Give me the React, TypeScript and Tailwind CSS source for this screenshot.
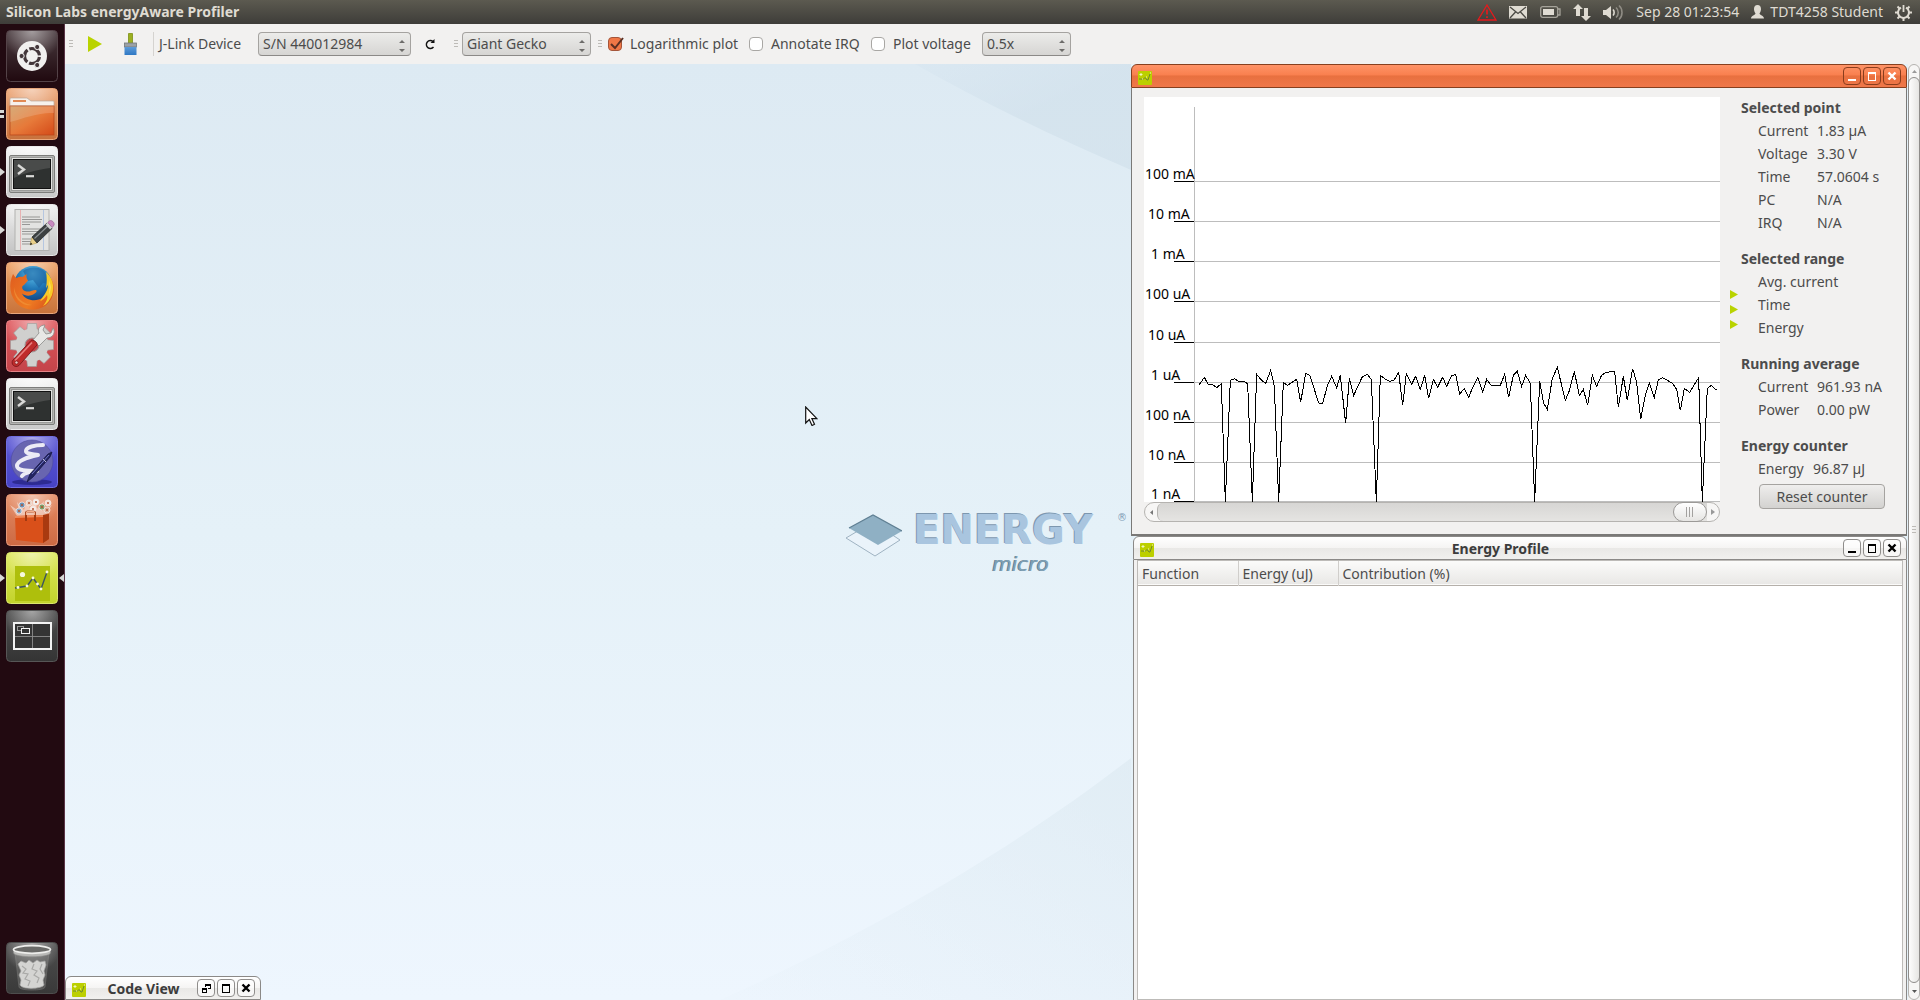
import React, { useState } from "react";

type Children = { children: React.ReactNode };

/* ---------- launcher artwork ---------- */

function Tile({ id, from, to, edge, children }: { id: string; from: string; to: string; edge: string } & Children) {
  return (
    <svg width="52" height="52" viewBox="0 0 52 52" aria-hidden="true">
      <defs>
        <linearGradient id={id} x1="0" y1="0" x2="0" y2="1">
          <stop offset="0" stopColor={from} />
          <stop offset="1" stopColor={to} />
        </linearGradient>
        <radialGradient id={`${id}-shine`} cx="0.5" cy="0" r="0.6">
          <stop offset="0" stopColor="#fff" stopOpacity="0.5" />
          <stop offset="1" stopColor="#fff" stopOpacity="0" />
        </radialGradient>
      </defs>
      <rect x="0.5" y="0.5" width="51" height="51" rx="4" fill={`url(#${id})`} stroke={edge} />
      <rect x="1" y="1" width="50" height="50" rx="4" fill={`url(#${id}-shine)`} />
      {children}
    </svg>
  );
}

function DashIcon() {
  return (
    <Tile id="dash" from="#4a3c40" to="#20090f" edge="#544348">
      <circle cx="26" cy="26" r="15" fill="#f1f0ef" />
      <circle cx="26" cy="26" r="7.5" fill="none" stroke="#43363a" strokeWidth="3.2" strokeDasharray="13.7 2" strokeDashoffset="-1" />
      {[[15.6, 26], [31.2, 17], [31.2, 35]].map(([x, y]) => (
        <circle key={`${x}-${y}`} cx={x} cy={y} r="2.6" fill="#43363a" stroke="#f1f0ef" strokeWidth="1" />
      ))}
    </Tile>
  );
}

function FilesIcon() {
  return (
    <Tile id="files" from="#eda677" to="#c8713c" edge="#e9a77c">
      <defs>
        <linearGradient id="folder" x1="0" y1="0" x2="1" y2="1">
          <stop offset="0" stopColor="#cf9a5c" />
          <stop offset="0.5" stopColor="#e77a3a" />
          <stop offset="1" stopColor="#d44a18" />
        </linearGradient>
      </defs>
      <path d="M4 18V11a1 1 0 0 1 1-1h16l4 3h22a1 1 0 0 1 1 1v4z" fill="#f6f1ec" stroke="#b9a89b" strokeWidth="0.7" />
      <rect x="7" y="12" width="13" height="2" fill="#e08a55" />
      <rect x="4" y="18" width="44" height="29" fill="url(#folder)" stroke="#b8481b" strokeWidth="0.8" />
      <path d="M4 18h44v7C34 24 18 30 4 34z" fill="#fff" opacity="0.16" />
    </Tile>
  );
}

function TerminalIcon({ id }: { id: string }) {
  return (
    <Tile id={id} from="#f4f4f4" to="#c9c9c9" edge="#ececec">
      <rect x="3.5" y="9.5" width="45" height="37" rx="1.5" fill="#b4b4b2" stroke="#7d7d7b" />
      <rect x="5.5" y="11.5" width="41" height="33" fill="#e2e2e0" stroke="#9a9a98" />
      <rect x="7.5" y="13.5" width="37" height="29" fill="#2e3130" stroke="#111" />
      <path d="M8 14h36v8C30 24 18 27 8 32z" fill="#fff" opacity="0.13" />
      <path d="M12 19l6 4.5-6 4.5" fill="none" stroke="#d9d9d7" strokeWidth="2.4" />
      <path d="M20 30.2h8" stroke="#d9d9d7" strokeWidth="2.2" />
    </Tile>
  );
}

function EditorIcon() {
  return (
    <Tile id="editor" from="#efefef" to="#c2c2c2" edge="#e6e6e6">
      <rect x="9" y="5.5" width="34" height="41" fill="#e3e3e1" stroke="#b2b2b0" />
      <path d="M14.5 6v40" stroke="#e9a6a6" strokeWidth="0.8" />
      <path d="M37.5 6v40" stroke="#a9bfe0" strokeWidth="0.8" />
      <path d="M16 13h18M16 15.500h20M16 18h19M16 20.500h8M16 25h19M16 27.500h18M16 30h16M16 35h14M16 37.500h12M16 40h9" stroke="#8f8f8d" strokeWidth="0.9" />
      <path d="M24 41l2-8 5 6z" fill="#ead08b" stroke="#b69a4c" strokeWidth="0.5" />
      <path d="M26 33l15-14 5 5.500L31 39z" fill="#3d4142" stroke="#1d1f20" strokeWidth="0.7" />
      <path d="M28.500 34.500l14-13" stroke="#8d9294" strokeWidth="1.1" />
      <path d="M39.500 20.500l2.200-2 4.600 5-2.200 2z" fill="#cfcfcf" />
      <path d="M41.700 18.500l2-1.700c2-1 5 1.600 4.400 4.200l-1.800 2.500z" fill="#c98ac0" stroke="#8f5d88" strokeWidth="0.6" />
      <path d="M24 41l.7-2.800 1.700 2z" fill="#222" />
    </Tile>
  );
}

function FirefoxIcon() {
  return (
    <Tile id="firefox" from="#eda063" to="#c8733b" edge="#e9a77c">
      <defs>
        <radialGradient id="globe" cx="0.5" cy="0.2" r="0.8">
          <stop offset="0" stopColor="#5fc0ea" />
          <stop offset="0.5" stopColor="#2178b8" />
          <stop offset="1" stopColor="#123a78" />
        </radialGradient>
        <linearGradient id="fox" x1="0" y1="0.2" x2="1" y2="0.8">
          <stop offset="0" stopColor="#e2611f" />
          <stop offset="0.6" stopColor="#ee7a22" />
          <stop offset="1" stopColor="#d9541b" />
        </linearGradient>
      </defs>
      <circle cx="27" cy="23" r="19" fill="url(#globe)" />
      <path d="M17 9c5-4 14-5 20-1 4 3 3 9 7 14l-7-1-4 5-6-8-5 1z" fill="#1b5e9d" opacity="0.55" />
      <path d="M7 12c1 1.500 2 3 3.500 4 2-1 4-1.500 6-1l4-3c0 3-.5 5 1.500 6.500l-4 4.500c-3 1-2 5 1 6 4 2 8-1.500 11-1 1.500 1 0 3-2 4-4 2.500-9 2-12-.5 3 7 14 9 21 4 5-3 7-9 8-19 5 8 3 19-3 25-8 8-22 8-30 1C4 35 2 23 7 12z" fill="url(#fox)" />
      <path d="M40 10c6 5 9 14 6 23-2 5-5 9-9 11 4-5 5-8 4-11-2 3-4 5-7 6 5-7 8-11 8-16-1 1-1 2-2 3 1-6 1-11 0-16z" fill="#f7c928" />
      <path d="M43 18c2 5 2 10 0 15 1-5 1-10 0-15z" fill="#fff08a" />
      <path d="M8 25c1 9 8 17 18 18-9 2-19-6-18-18z" fill="#f29a3c" opacity="0.6" />
    </Tile>
  );
}

function SettingsIcon() {
  return (
    <Tile id="settings" from="#e0575c" to="#c4444a" edge="#e58286">
      <g fill="#d0d0ce" stroke="#9a9a98" strokeWidth="0.6">
        {[0, 45, 90, 135, 180, 225, 270, 315].map((a) => (
          <path key={a} d="M20.500 12l1-8.500h9l1 8.500z" transform={`rotate(${a} 26 25)`} />
        ))}
      </g>
      <circle cx="26" cy="25" r="16.500" fill="#d0d0ce" />
      <circle cx="26" cy="25" r="7" fill="#c6444a" stroke="#9a9a98" />
      <path d="M27 20l6-7c-2-4 1-8 6-8l-2 5 3 4 5-1 2-5c3 4 0 10-6 10l-8 8z" fill="#e8e8e6" stroke="#8b8b89" strokeWidth="0.8" />
      <path d="M7 40L25 20.500c2-1.500 7 2 6 4.500L13 45.500c-4 3-9-1.500-6-5.500z" fill="#bf2b2b" stroke="#7d1518" strokeWidth="0.9" />
      <path d="M9 40.500L26 22.500" stroke="#e88080" strokeWidth="1.600" />
      <circle cx="10.500" cy="42.500" r="1.600" fill="#f0c8c8" stroke="#7d1518" strokeWidth="0.7" />
    </Tile>
  );
}

function EmacsIcon() {
  return (
    <Tile id="emacs" from="#5e5ad6" to="#4642c4" edge="#716ee0">
      <ellipse cx="26" cy="46" rx="20" ry="3" fill="#1c1a70" opacity="0.6" />
      <circle cx="26" cy="25" r="21" fill="#6865b0" stroke="#4d4aa0" strokeWidth="0.6" />
      <path d="M37 9c-8 0-17 2-17 6 0 3 7 3 12 4-9 2-21 5-21 11 0 5 11 5 20 5-5 0-13 2-15 5" fill="none" stroke="#ecebf5" strokeWidth="4" strokeLinecap="round" strokeLinejoin="round" />
      <path d="M21 46l3-8L42 18l4-2-2 5-17 20z" fill="#232564" stroke="#121238" strokeWidth="0.7" />
      <path d="M26 38l17-19" stroke="#7479c4" strokeWidth="1" />
      <path d="M37 23l3 3" stroke="#b9b9d6" strokeWidth="1" />
    </Tile>
  );
}

function SoftwareIcon() {
  return (
    <Tile id="software" from="#e58a62" to="#cc6a44" edge="#e6997a">
      <path d="M11 22L4 11l9 6-2-9 7 8 3-10 3 9 5-11 2 11 7-8-2 10 10-6-7 11z" fill="#fff" opacity="0.45" />
      {[[16, 11, "#6d93b8"], [23, 9, "#e9d2c4"], [30, 8, "#f2f2f0"], [36, 13, "#7fa06d"], [13, 17, "#8aa7c4"], [42, 9, "#f1e2da"], [27, 15, "#f4ece8"], [41, 16, "#d9b09a"]].map(([x, y, c]) => (
        <g key={`${x}-${y}`}>
          <circle cx={x} cy={y} r="3" fill={String(c)} stroke="#f6e6de" strokeWidth="0.8" />
          <circle cx={x} cy={y} r="1" fill="#b5532f" />
        </g>
      ))}
      <path d="M9 22l28-1 6-1v25l-6 4-27-3z" fill="#d9501a" />
      <path d="M37 21l6-1v25l-6 4z" fill="#a93a10" />
      <path d="M9 22l28-1v2l-28 1z" fill="#f08a5a" />
      <path d="M20 27v-8c0-1 1-1.500 2-1.500h5c1 0 2 .5 2 1.500v8" fill="none" stroke="#a33a12" strokeWidth="2" />
      <path d="M20.500 21v-2c0-1 1-1.500 2-1.500h4c1 0 2 .5 2 1.500v2" fill="none" stroke="#f3b08e" strokeWidth="1.300" />
    </Tile>
  );
}

function ProfilerIcon() {
  return (
    <Tile id="profiler" from="#dfe85e" to="#c3d32c" edge="#dbe66e">
      <rect x="9" y="14" width="35" height="35" fill="#aebf0c" />
      <circle cx="16.500" cy="22.500" r="2.600" fill="#f6f9dc" />
      <path d="M9 36l12-2 6-8 8 11 6-17" fill="none" stroke="#3c5560" strokeWidth="1.400" />
      {[[12, 35.500], [21, 34], [27, 26], [31.500, 32], [35, 37], [41, 20]].map(([x, y]) => (
        <circle key={x} cx={x} cy={y} r="1.400" fill="#f6f9dc" />
      ))}
    </Tile>
  );
}

function WorkspaceIcon() {
  return (
    <Tile id="spaces" from="#4c4c4c" to="#343434" edge="#565656">
      <rect x="8" y="13" width="37" height="26" fill="#343434" stroke="#f2f2f2" strokeWidth="2" />
      <path d="M26.500 14v24M9 26.500h35" stroke="#8c8c8c" strokeWidth="0.900" />
      <rect x="11.500" y="16.500" width="6" height="4" fill="none" stroke="#999" />
      <rect x="15.500" y="18.500" width="8" height="5" fill="#343434" stroke="#f2f2f2" />
    </Tile>
  );
}

function TrashIcon() {
  return (
    <Tile id="trash" from="#4f4f4f" to="#393939" edge="#4d4d4d">
      <path d="M9 10l4 35c0 4 26 4 26 0l4-35z" fill="#8c8c8a" opacity="0.35" stroke="#b5b5b3" strokeWidth="0.8" />
      <path d="M12 22l3-3 5 2 3-3 4 3 4-3 3 2 5-1 1 4-2 6 1 4-2 5 1 5c-2 4-22 5-24 0l1-5-2-5 2-4z" fill="#d4d4d2" stroke="#a2a2a0" strokeWidth="0.7" />
      <path d="M16 24l4 3-3 4 5 1-3 5 5 2-2 5M28 22l-2 5 5 2-3 4 5 3-2 5M36 22l-2 5 3 5" fill="none" stroke="#a9a9a7" strokeWidth="1.200" />
      <path d="M7.500 7v4c2 5 35 5 37 0V7" fill="#b9b9b7" stroke="#8a8a88" strokeWidth="0.6" />
      <ellipse cx="26" cy="7.500" rx="18.500" ry="3.800" fill="#6a6a68" stroke="#ededeb" strokeWidth="1.700" />
    </Tile>
  );
}

type LauncherEntry = { label: string; icon: React.ReactNode; left?: "arrow" | "bars"; right?: boolean };

const launcherEntries: LauncherEntry[] = [
  { label: "Dash home", icon: <DashIcon /> },
  { label: "Files", icon: <FilesIcon />, left: "bars" },
  { label: "Terminal", icon: <TerminalIcon id="term-a" />, left: "arrow" },
  { label: "Text editor", icon: <EditorIcon />, left: "arrow" },
  { label: "Firefox", icon: <FirefoxIcon /> },
  { label: "System settings", icon: <SettingsIcon /> },
  { label: "Second terminal", icon: <TerminalIcon id="term-b" /> },
  { label: "Emacs", icon: <EmacsIcon /> },
  { label: "Software centre", icon: <SoftwareIcon /> },
  { label: "energyAware Profiler", icon: <ProfilerIcon />, left: "arrow", right: true },
  { label: "Workspace switcher", icon: <WorkspaceIcon /> },
];

function LauncherItem({ label, icon, left, right }: LauncherEntry) {
  return (
    <li className="flex h-[52px] items-center">
      <span className="flex w-1.5 shrink-0">
        {left && (
          <svg width="6" height="8" viewBox="0 0 6 8" aria-hidden="true">
            {left === "arrow" ? <path d="M0 0l5 4-5 4z" fill="#d8d8d6" /> : <path d="M0 0h4v3H0zM0 5h4v3H0z" fill="#d8d8d6" />}
          </svg>
        )}
      </span>
      <button type="button" aria-label={label} className="block shrink-0">
        {icon}
      </button>
      <span className="flex w-1.5 shrink-0 justify-end">
        {right && (
          <svg width="5" height="8" viewBox="0 0 5 8" aria-hidden="true">
            <path d="M5 0L0 4l5 4z" fill="#d8d8d6" />
          </svg>
        )}
      </span>
    </li>
  );
}

/* ---------- top panel ---------- */

function TopPanel() {
  return (
    <header className="flex h-6 shrink-0 items-center bg-linear-to-b from-[#5c5a50] to-[#3e3d39] pr-2 pl-1.5 text-sm text-[#dfdbd2]">
      <h1 className="text-sm leading-6 font-bold">Silicon Labs energyAware Profiler</h1>
      <div className="ml-auto flex items-center">
        <svg className="mr-3" width="20" height="17" viewBox="0 0 20 17" role="img" aria-label="Warning">
          <path d="M10 1L19 16H1z" fill="none" stroke="#e8191c" strokeWidth="1.300" />
          <path d="M10 5.500v5M10 12.300v1.700" stroke="#e8191c" strokeWidth="1.700" />
        </svg>
        <svg className="mr-3" width="19" height="13" viewBox="0 0 19 13" role="img" aria-label="Messages">
          <rect width="18" height="12.500" fill="#dfdbd2" />
          <path d="M1 1l8 6.500L17 1M1 12l5.500-6M17 12l-5.500-6" fill="none" stroke="#4b4a44" strokeWidth="1.300" />
        </svg>
        <svg className="mr-3" width="21" height="12" viewBox="0 0 21 12" role="img" aria-label="Battery">
          <rect x="0.700" y="0.700" width="17" height="10.600" rx="2" fill="none" stroke="#a5a299" strokeWidth="1.300" />
          <rect x="3" y="3" width="11" height="6" fill="#dfdbd2" />
          <path d="M18 3h2v6h-2" fill="none" stroke="#a5a299" strokeWidth="1.300" />
        </svg>
        <svg className="mr-3" width="18" height="17" viewBox="0 0 18 17" role="img" aria-label="Network">
          <path d="M5 0l5 5H7v7H3V5H0zM13 17l5-5h-3V4h-4v8H8z" fill="#dfdbd2" />
        </svg>
        <svg className="mr-3" width="21" height="17" viewBox="0 0 21 17" role="img" aria-label="Sound">
          <path d="M0 6h3l5-4v13l-5-4H0z" fill="#dfdbd2" />
          <path d="M10 5.500c1.500 1.500 1.500 4.500 0 6" fill="none" stroke="#dfdbd2" strokeWidth="1.600" />
          <path d="M13 3.500c3 2.500 3 7.500 0 10M16 1.500c4 3.500 4 10.500 0 14" fill="none" stroke="#8f8c84" strokeWidth="1.600" />
        </svg>
        <time className="mr-3 leading-6">Sep 28 01:23:54</time>
        <svg className="mr-1.5" width="13" height="14" viewBox="0 0 13 14" aria-hidden="true">
          <path d="M6.500 0c2.500 0 3.700 2 3.500 4.500-.2 2-1 3.200-1.500 4 0 1.500 4.500 2 4.500 5H0c0-3 4.500-3.500 4.500-5C4 7.700 3.200 6.500 3 4.500 2.800 2 4 0 6.500 0z" fill="#dfdbd2" />
        </svg>
        <span className="mr-3 leading-6">TDT4258 Student</span>
        <svg width="17" height="17" viewBox="0 0 17 17" role="img" aria-label="Session">
          <path d="M11 3.600a5.500 5.500 0 1 1-5 0" fill="none" stroke="#dfdbd2" strokeWidth="2" />
          <path d="M8.500 1v7" stroke="#dfdbd2" strokeWidth="1.800" />
          <path d="M2.500 2.500l2 2M14.500 2.500l-2 2M0 8.500h3M17 8.500h-3M2.500 14.500l2-2M14.500 14.500l-2-2M8.500 17v-3" stroke="#dfdbd2" strokeWidth="2" />
        </svg>
      </div>
    </header>
  );
}

/* ---------- toolbar ---------- */

function Grip({ className = "" }: { className?: string }) {
  return (
    <svg className={className} width="4" height="8" viewBox="0 0 4 8" aria-hidden="true">
      <path d="M0 .5h4M0 3.500h4M0 6.500h4" stroke="#bdbbb7" strokeWidth="1" />
    </svg>
  );
}

function Combo({ id, label, options, className }: { id: string; label: string; options: string[]; className: string }) {
  return (
    <span className={`relative flex ${className}`}>
      <select
        id={id}
        aria-label={label}
        className="h-6 w-full appearance-none rounded-sm border border-[#a5a3a0] border-b-[#8b8987] bg-linear-to-b from-[#ececea] to-[#d6d5d3] pl-1 text-sm leading-5 text-[#4c4c4c]"
      >
        {options.map((o) => (
          <option key={o}>{o}</option>
        ))}
      </select>
      <svg className="pointer-events-none absolute top-2 right-1.5" width="6" height="12" viewBox="0 0 6 12" aria-hidden="true">
        <path d="M0 3l3-3 3 3zM0 9l3 3 3-3z" fill="#6d6c6a" />
      </svg>
    </span>
  );
}

function Check({ id, label, initial = false, className }: { id: string; label: string; initial?: boolean; className: string }) {
  const [on, setOn] = useState(initial);
  return (
    <span className={`flex items-center ${className}`}>
      <span className="relative flex">
        <input
          id={id}
          type="checkbox"
          checked={on}
          onChange={(e) => setOn(e.target.checked)}
          className="size-3.5 appearance-none rounded-sm border border-[#a9a7a4] bg-white checked:border-[#a4553a] checked:bg-[#f07746]"
        />
        {on && (
          <svg className="pointer-events-none absolute top-0 left-0" width="16" height="14" viewBox="0 0 16 14" aria-hidden="true">
            <path d="M3 7l4 4 8-10" fill="none" stroke="#5b2f22" strokeWidth="2" />
          </svg>
        )}
      </span>
      <label htmlFor={id} className="pl-2">
        {label}
      </label>
    </span>
  );
}

function Toolbar() {
  return (
    <div className="flex h-10 shrink-0 items-center bg-[#f2f1f0] pl-1 text-sm whitespace-nowrap text-[#4c4c4c]">
      <Grip />
      <button type="button" aria-label="Start" className="ml-[15px]">
        <svg width="14" height="16" viewBox="0 0 14 16">
          <path d="M0 0l14 8-14 8z" fill="#b9d300" />
        </svg>
      </button>
      <button type="button" aria-label="Clear" className="ml-[22px]">
        <svg width="13" height="24" viewBox="0 0 13 24">
          <defs>
            <linearGradient id="bristle" x1="0" y1="0" x2="0" y2="1">
              <stop offset="0" stopColor="#5d9bd8" />
              <stop offset="1" stopColor="#2f78c4" />
            </linearGradient>
          </defs>
          <path d="M4.500 11V1.500h4V11" fill="#9cb020" stroke="#7c8f14" strokeWidth="0.800" />
          <rect x="0.500" y="11" width="12" height="4" fill="#9ba1a6" stroke="#70767b" strokeWidth="0.800" />
          <path d="M.5 15h12v8H.5z" fill="url(#bristle)" />
        </svg>
      </button>
      <span className="ml-4 h-6 w-px bg-[#d5d3d0]" />
      <label htmlFor="device" className="w-[104px] pl-[5px]">
        J-Link Device
      </label>
      <Combo id="device" label="J-Link Device" options={["S/N 440012984"]} className="w-[153px]" />
      <button type="button" aria-label="Refresh devices" className="ml-3.5">
        <svg width="11" height="12" viewBox="0 0 11 12">
          <path d="M8.500 9A4 4 0 1 1 8 3.500" fill="none" stroke="#111" strokeWidth="1.400" />
          <path d="M9.500 1v4H5.500z" fill="#111" />
        </svg>
      </button>
      <Grip className="ml-[18px]" />
      <Combo id="chip" label="Microcontroller" options={["Giant Gecko"]} className="ml-1 w-[129px]" />
      <Grip className="ml-[7px]" />
      <Check id="log" label="Logarithmic plot" initial className="ml-1.5 w-[141px]" />
      <Check id="irq" label="Annotate IRQ" className="w-[122px]" />
      <Check id="volt" label="Plot voltage" className="w-[111px]" />
      <Combo id="zoom" label="Plot scale" options={["0.5x"]} className="w-[89px]" />
    </div>
  );
}

/* ---------- windows ---------- */

const glyphs = {
  Minimise: <path d="M4 12h8" stroke="currentColor" strokeWidth="2" />,
  Maximise: (
    <g fill="none" stroke="currentColor">
      <path d="M4.500 12.500v-8h7v8z" />
      <path d="M4 5h8" strokeWidth="2" />
    </g>
  ),
  Restore: (
    <g fill="none" stroke="currentColor">
      <path d="M7.500 7V4.500h5v4H10" />
      <path d="M4.500 12.500v-4h4v4z" />
      <path d="M7 4.500h6M4 8.500h5" strokeWidth="2" />
    </g>
  ),
  Close: <path d="M4.500 4.500l7 7M11.500 4.500l-7 7" stroke="currentColor" strokeWidth="2.400" />,
};

function WindowButtons({ kinds, active }: { kinds: (keyof typeof glyphs)[]; active?: boolean }) {
  return (
    <div className="flex gap-0.5">
      {kinds.map((k) => (
        <button
          key={k}
          type="button"
          aria-label={k}
          className={
            active
              ? "flex size-[18px] items-center justify-center rounded border border-[#8a3d1d] text-white"
              : "flex size-[18px] items-center justify-center rounded border border-[#8f8d8b] bg-white/60 text-black"
          }
        >
          <svg width="16" height="16" viewBox="0 0 16 16" shapeRendering={k === "Close" ? "auto" : "crispEdges"}>
            {glyphs[k]}
          </svg>
        </button>
      ))}
    </div>
  );
}

function AppBadge() {
  return (
    <svg className="mt-1" width="14" height="14" viewBox="0 0 14 14" aria-hidden="true">
      <rect width="14" height="14" rx="1" fill="#bccf00" />
      <path d="M1 8h2l2 .5 2-2 2 2.500h1l2-6" fill="none" stroke="#6f8a30" strokeWidth="1" />
      <path d="M3 2v3M1.500 3.500h3M12 2h1M4 8h1M8 6h1" stroke="#f1f6c0" strokeWidth="1" />
    </svg>
  );
}

const passiveBar = "bg-[linear-gradient(#ffffff,#f5f4f3_50%,#e9e8e6_51%,#f1f0ee)]";

function TitleBar({ title, className, active, kinds }: { title: string; className: string; active?: boolean; kinds: (keyof typeof glyphs)[] }) {
  return (
    <div className={`flex h-6 shrink-0 items-center rounded-t-md border pr-[5px] pl-1.5 ${className}`}>
      <AppBadge />
      <h2 className="flex-1 pt-0.5 pl-1 text-center text-sm leading-5 font-bold text-[#3c3c3c]">{title}</h2>
      <WindowButtons kinds={kinds} active={active} />
    </div>
  );
}

const axis = [
  { label: "100 mA", x: 1, y: 84 },
  { label: "10 mA", x: 4, y: 124 },
  { label: "1 mA", x: 7, y: 164 },
  { label: "100 uA", x: 1, y: 204 },
  { label: "10 uA", x: 4, y: 245 },
  { label: "1 uA", x: 7, y: 285 },
  { label: "100 nA", x: 1, y: 325 },
  { label: "10 nA", x: 4, y: 365 },
  { label: "1 nA", x: 7, y: 404 },
];

/* Samples in thirds of a plot pixel, time then level. */
const samples =
  "238,224 253,202 264,222 277,223 290,233 304,221 316,575 331,211 344,206 357,216 371,214 383,221 397,575 410,193 424,210 437,220 452,181 463,228 476,575 490,217 502,226 516,217 530,208 542,277 557,190 570,197 582,235 596,279 608,280 623,224 635,199 650,233 661,196 677,340 688,205 701,256 713,230 726,202 742,193 754,208 769,575 781,196 795,207 810,214 822,211 836,187 848,286 859,190 875,223 887,199 901,238 914,196 926,265 940,208 953,232 968,202 980,229 995,197 1007,193 1019,253 1033,235 1046,262 1058,232 1073,202 1088,247 1100,208 1112,225 1141,226 1154,193 1166,262 1180,196 1192,184 1205,229 1217,196 1231,220 1244,575 1259,213 1271,280 1282,298 1297,205 1312,172 1336,271 1348,242 1363,184 1378,257 1390,238 1403,286 1417,196 1430,229 1444,197 1457,187 1484,184 1495,292 1510,199 1522,271 1538,176 1550,217 1562,328 1576,256 1588,220 1603,262 1615,210 1628,203 1658,220 1670,238 1681,301 1693,235 1709,247 1736,203 1747,575 1762,235 1774,226 1790,241";

function Plot() {
  return (
    <svg className="block w-full bg-white" height="405" role="img" aria-label="Current over time">
      <g shapeRendering="crispEdges">
        <path d="M50.500 10v395" stroke="#bdbdbd" />
        {axis.map((a) => (
          <g key={a.label}>
            <line x1="51" x2="100%" y1={a.y + 0.5} y2={a.y + 0.5} stroke="#bdbdbd" />
            <line x1="30" x2="50" y1={a.y + 0.5} y2={a.y + 0.5} stroke="#000" />
          </g>
        ))}
        <polyline points={samples} transform="translate(-24 213) scale(0.33333)" vectorEffect="non-scaling-stroke" fill="none" stroke="#000" strokeWidth="1" />
      </g>
      {axis.map((a) => (
        <text key={a.label} x={a.x} y={a.y - 2} fontSize="14" fill="#000">
          {a.label}
        </text>
      ))}
    </svg>
  );
}

function PlotScroll() {
  return (
    <div className="flex h-5 items-stretch rounded-full border border-[#b5b3b0] bg-[#f7f6f5]">
      <button type="button" aria-label="Scroll left" className="flex w-3 items-center justify-end pr-1">
        <svg width="3" height="5" viewBox="0 0 3 5">
          <path d="M3 0v5L0 2.500z" fill="#777" />
        </svg>
      </button>
      <div className="flex flex-1 justify-end rounded-l-md border-l border-[#b5b3b0] bg-linear-to-b from-[#d7d6d4] to-[#e5e4e2]">
        <div className="-my-px flex w-[34px] items-center justify-center rounded-full border border-[#9b9997] bg-linear-to-b from-white to-[#e6e5e3]">
          <svg width="8" height="10" viewBox="0 0 8 10" aria-hidden="true">
            <path d="M.5 0v10M3.500 0v10M6.500 0v10" stroke="#a3a19f" />
          </svg>
        </div>
      </div>
      <button type="button" aria-label="Scroll right" className="flex w-3 items-center justify-center">
        <svg width="4" height="6" viewBox="0 0 4 6">
          <path d="M0 0v6l4-3z" fill="#999" />
        </svg>
      </button>
    </div>
  );
}

type Section = { title: string; rows: [string, string][]; narrow?: boolean };

const sections: Section[] = [
  { title: "Selected point", rows: [["Current", "1.83 µA"], ["Voltage", "3.30 V"], ["Time", "57.0604 s"], ["PC", "N/A"], ["IRQ", "N/A"]] },
  { title: "Selected range", rows: [["Avg. current", ""], ["Time", ""], ["Energy", ""]] },
  { title: "Running average", rows: [["Current", "961.93 nA"], ["Power", "0.00 pW"]] },
  { title: "Energy counter", rows: [["Energy", "96.87 µJ"]], narrow: true },
];

function Readings() {
  return (
    <div className="flex flex-col gap-[13px] text-sm leading-[23px] whitespace-nowrap text-[#4c4c4c]">
      {sections.map((s) => (
        <section key={s.title}>
          <h3 className="font-bold">{s.title}</h3>
          <dl className="pl-[17px]">
            {s.rows.map(([k, v]) => (
              <div key={k} className="flex">
                <dt className={s.narrow ? "w-[55px]" : "w-[59px]"}>{k}</dt>
                <dd>{v}</dd>
              </div>
            ))}
          </dl>
          {s.narrow && (
            <button type="button" className="mt-1 ml-[18px] flex h-[25px] w-[126px] items-center justify-center rounded-sm border border-[#a5a3a0] bg-linear-to-b from-[#efeeed] to-[#d3d2d0]">
              Reset counter
            </button>
          )}
        </section>
      ))}
    </div>
  );
}

function PlotWindow() {
  return (
    <article>
      <TitleBar
        title=""
        active
        kinds={["Minimise", "Maximise", "Close"]}
        className="border-[#87401f] bg-[linear-gradient(#ff9367,#f9804f_45%,#e8703f_50%,#f0784a)]"
      />
      <div className="flex border-x border-b-2 border-[#7a7977] bg-[#f2f1f0] pt-2 pb-3 pl-3">
        <div className="min-w-0 flex-1 pt-px">
          <Plot />
          <PlotScroll />
        </div>
        <div className="flex w-[21px] shrink-0 flex-col gap-1.5 pt-[194px] pl-2.5">
          {[0, 1, 2].map((i) => (
            <svg key={i} width="8" height="9" viewBox="0 0 8 9" aria-hidden="true">
              <path d="M0 0l8 4.500L0 9z" fill="#b9d300" />
            </svg>
          ))}
        </div>
        <div className="w-[165px] shrink-0">
          <Readings />
        </div>
      </div>
    </article>
  );
}

function ProfileWindow() {
  return (
    <article className="ml-0.5 flex flex-1 flex-col">
      <TitleBar title="Energy Profile" kinds={["Minimise", "Maximise", "Close"]} className={`border-[#8b8987] ${passiveBar}`} />
      <div className="flex flex-1 border-x border-[#8b8987] bg-[#f2f1f0] px-[3px]">
        <div className="flex-1 border border-[#bdbbb8] bg-white">
          <table className="w-full table-fixed text-left text-sm text-[#4c4c4c]">
            <thead>
              <tr className="h-6 border-b border-[#b5b0aa] bg-linear-to-b from-[#fbfbfa] to-[#e9e8e6]">
                <th scope="col" className="w-[100px] border-r border-[#d0cecb] pt-0.5 pl-1 font-normal">Function</th>
                <th scope="col" className="w-[100px] border-r border-[#d0cecb] pt-0.5 pl-1 font-normal">Energy (uJ)</th>
                <th scope="col" className="pt-0.5 pl-1 font-normal">Contribution (%)</th>
              </tr>
            </thead>
            <tbody />
          </table>
        </div>
      </div>
    </article>
  );
}

function Backdrop() {
  return (
    <svg className="absolute inset-0 size-full" viewBox="0 0 1066 936" preserveAspectRatio="none" aria-hidden="true">
      <defs>
        <linearGradient id="sky" x1="0" y1="0" x2="0" y2="1">
          <stop offset="0" stopColor="#ddeaf3" />
          <stop offset="0.5" stopColor="#e5f1f8" />
          <stop offset="1" stopColor="#eef6fe" />
        </linearGradient>
        <linearGradient id="upper" x1="0" y1="0" x2="1" y2="1">
          <stop offset="0" stopColor="#cfdfec" stopOpacity="0.2" />
          <stop offset="0.5" stopColor="#cfdfea" stopOpacity="0.6" />
        </linearGradient>
        <linearGradient id="lower" x1="0" y1="1" x2="1" y2="0">
          <stop offset="0" stopColor="#dfebf3" stopOpacity="0.1" />
          <stop offset="1" stopColor="#dce9f1" stopOpacity="0.8" />
        </linearGradient>
      </defs>
      <rect width="1066" height="936" fill="url(#sky)" />
      <path d="M850 0C920 40 1000 78 1066 106V0z" fill="url(#upper)" />
      <path d="M655 936C820 862 960 776 1066 694V936z" fill="url(#lower)" opacity="0.8" />
    </svg>
  );
}

function Brand() {
  return (
    <div className="relative flex items-start">
      <svg className="mt-2.5 mr-[11px]" width="56" height="44" viewBox="0 0 56 44" aria-hidden="true">
        <path d="M0 24L27 8l27 18-25 16z" fill="#eaf3fa" stroke="#9fb3c2" strokeWidth="1" />
        <path d="M3 14L27 1l29 16-24 14z" fill="#8fb0c4" />
        <path d="M3 14L27 1l29 16" fill="none" stroke="#5f7f93" strokeWidth="1.200" />
      </svg>
      <div className="pt-1 font-['DejaVu_Sans',sans-serif]">
        <div className="text-[40px] leading-[44px] font-bold text-[#a9c5df] [text-shadow:-1px_-1px_0_#7d97af]">ENERGY</div>
        <div className="pr-11 text-right text-xl leading-6 text-[#7fa0b4] italic [text-shadow:-1px_0_0_#5f7f93]">micro</div>
      </div>
      <span className="mt-1.5 ml-6 font-['DejaVu_Sans',sans-serif] text-[10px] leading-4 text-[#7d9bb5]">®</span>
    </div>
  );
}

function SideScroll() {
  return (
    <div className="flex w-3 shrink-0 flex-col rounded-full border border-[#b5b3b0] bg-[#f7f6f5]">
      <button type="button" aria-label="Scroll up" className="flex h-3 items-center justify-center">
        <svg width="5" height="3" viewBox="0 0 5 3">
          <path d="M0 3h5L2.500 0z" fill="#999" />
        </svg>
      </button>
      <div className="-mx-px flex flex-1 items-center justify-center rounded-full border border-[#8f8d8b] bg-linear-to-r from-[#fdfdfd] to-[#e6e5e3]">
        <Grip />
      </div>
      <button type="button" aria-label="Scroll down" className="flex h-4 items-center justify-center">
        <svg width="5" height="3" viewBox="0 0 5 3">
          <path d="M0 0h5L2.500 3z" fill="#555" />
        </svg>
      </button>
    </div>
  );
}

export default function App() {
  return (
    <div className="flex min-h-screen flex-col bg-[#f2f1f0] font-['Noto_Sans',sans-serif]">
      <TopPanel />
      <div className="flex flex-1">
        <nav aria-label="Launcher" className="flex w-[65px] shrink-0 border-r border-[#5b3547] bg-[#220a11]">
          <ul className="flex flex-1 flex-col gap-1.5 py-1.5">
            {launcherEntries.map((e) => (
              <LauncherItem key={e.label} {...e} />
            ))}
            <li className="mt-auto pl-1.5">
              <button type="button" aria-label="Trash" className="block">
                <TrashIcon />
              </button>
            </li>
          </ul>
        </nav>
        <div className="flex min-w-0 flex-1 flex-col">
          <Toolbar />
          <main className="flex flex-1">
            <div className="relative flex min-w-0 flex-1 flex-col">
              <Backdrop />
              <div className="relative flex flex-1 items-center justify-end pt-10 pr-1">
                <Brand />
              </div>
              <article className="relative w-[196px]">
                <TitleBar title="Code View" kinds={["Restore", "Maximise", "Close"]} className={`border-[#8b8987] ${passiveBar}`} />
              </article>
              <svg className="absolute top-[342px] left-[740px]" width="13" height="20" viewBox="0 0 13 20" aria-hidden="true">
                <path d="M.7 1v16l3.600-3.500 2.700 6 2.500-1.200-2.600-5.600h5z" fill="#fff" stroke="#111" strokeWidth="1.200" />
              </svg>
            </div>
            <div className="flex w-[777px] shrink-0 flex-col bg-[#e5f1f8] pr-px">
              <PlotWindow />
              <ProfileWindow />
            </div>
            <SideScroll />
          </main>
        </div>
      </div>
    </div>
  );
}
